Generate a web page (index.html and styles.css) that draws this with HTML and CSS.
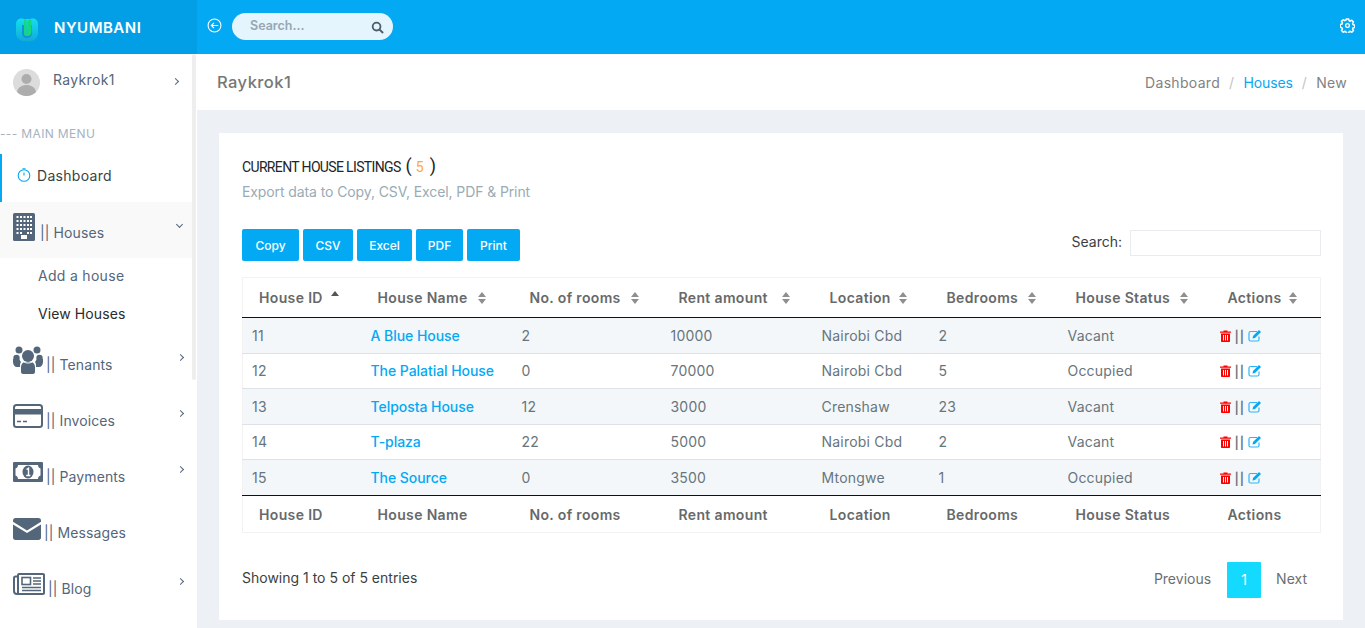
FILE: index.html
```html
<!DOCTYPE html>
<html lang="en">
<head>
    <meta charset="UTF-8">
    <title>Nyumbani - Houses</title>
    <link rel="stylesheet" href="styles.css">
</head>
<body>
    <header class="topbar">
        <div class="brand">
            <svg class="brand-logo" viewBox="0 0 22 24">
                <defs>
                    <linearGradient id="logoFill" x1="0" y1="0" x2="0" y2="1">
                        <stop offset="0" stop-color="#12e0ec"/>
                        <stop offset="1" stop-color="#12a9d8"/>
                    </linearGradient>
                </defs>
                <path d="M0 6c0-3 2-5.500 5-5.500 1.500 0 3 .5 3 .5h6s1.500-.5 3-.5c3 0 5 2.500 5 5.500v9c0 5-4 8.500-11 8.500S0 20 0 15z" fill="url(#logoFill)"/>
                <path d="M6 7v8c0 3 2 5 5 5s5-2 5-5V7h-2v8c0 2-1 3-3 3s-3-1-3-3V7z" fill="#1493d6"/>
                <path d="M8 1.500h2.500V14c0 1 .2 1.500 .5 1.500s.5-.5 .5-1.500V5.500c0-2.500 1-4 2.500-4 1 0 1.500.5 1.500 1.500v11c0 2.500-2 4-4.500 4S8 16.500 8 14z" fill="#14d77f"/>
            </svg>
            <span class="brand-name">NYUMBANI</span>
        </div>
        <div class="topbar-main">
            <svg class="back-icon" viewBox="0 0 14 14">
                <circle cx="7" cy="7" r="6" fill="none" stroke="#fff" stroke-width="1"/>
                <path d="M10.500 7h-6.500M6.500 4.500L4 7l2.500 2.500" fill="none" stroke="#fff" stroke-width="1"/>
            </svg>
            <div class="top-search">
                <span class="top-search-text">Search...</span>
                <svg class="top-search-icon" viewBox="0 0 14 14">
                    <circle cx="6" cy="6" r="4.200" fill="none" stroke="#4f5d6b" stroke-width="2"/>
                    <path d="M9 9l4 4" stroke="#4f5d6b" stroke-width="2.200"/>
                </svg>
            </div>
            <svg class="gear-icon" viewBox="0 0 16 16">
                <circle cx="8" cy="8" r="2" fill="none" stroke="#fff" stroke-width="1.400"/>
                <path d="M6.700 1h2.600l.4 1.900 1.200.5 1.700-1 1.800 1.800-1 1.700.5 1.200 1.900.4v2.600l-1.900.4-.5 1.200 1 1.700-1.800 1.800-1.700-1-1.200.5-.4 1.900H6.700l-.4-1.900-1.200-.5-1.700 1-1.800-1.800 1-1.700-.5-1.200L.2 9.500V6.900l1.900-.4.500-1.200-1-1.700 1.800-1.800 1.700 1 1.200-.5z" fill="none" stroke="#fff" stroke-width="1.600" stroke-linejoin="round"/>
            </svg>
        </div>
    </header>

    <div class="layout">
        <aside class="sidebar">
            <div class="user-panel">
                <svg class="avatar" viewBox="0 0 27 27">
                    <circle cx="13.500" cy="13.500" r="13.500" fill="#dcdcdc"/>
                    <circle cx="13.500" cy="10" r="5" fill="#adadad"/>
                    <path d="M4 23c1-5 5-7 9.500-7s8.500 2 9.500 7c-2.500 2.500-6 4-9.500 4s-7-1.500-9.500-4z" fill="#adadad"/>
                </svg>
                <span class="user-name">Raykrok1</span>
                <span class="chev chev-user"></span>
            </div>
            <div class="menu-label">--- MAIN MENU</div>
            <a class="nav-dash">
                <svg class="dash-icon" viewBox="0 0 14 14">
                    <circle cx="7" cy="7.500" r="5.800" fill="none" stroke="#03a9f3" stroke-width="1.100"/>
                    <path d="M5.500.7h3M7 4.500v3" stroke="#03a9f3" stroke-width="1.100" fill="none"/>
                </svg>
                <span>Dashboard</span>
            </a>
            <a class="nav-item nav-open">
                <svg class="nav-icon icon-building" viewBox="0 0 22 28">
                    <rect width="22" height="28" rx="1.500" fill="#54667a"/>
                    <g fill="#fff">
                        <rect x="3.500" y="3" width="2" height="2"/><rect x="7" y="3" width="2" height="2"/><rect x="10.500" y="3" width="2" height="2"/><rect x="14" y="3" width="2" height="2"/><rect x="17" y="3" width="2" height="2"/>
                        <rect x="3.500" y="7" width="2" height="2"/><rect x="7" y="7" width="2" height="2"/><rect x="10.500" y="7" width="2" height="2"/><rect x="14" y="7" width="2" height="2"/><rect x="17" y="7" width="2" height="2"/>
                        <rect x="3.500" y="11" width="2" height="2"/><rect x="7" y="11" width="2" height="2"/><rect x="10.500" y="11" width="2" height="2"/><rect x="14" y="11" width="2" height="2"/><rect x="17" y="11" width="2" height="2"/>
                        <rect x="3.500" y="15" width="2" height="2"/><rect x="7" y="15" width="2" height="2"/><rect x="10.500" y="15" width="2" height="2"/><rect x="14" y="15" width="2" height="2"/><rect x="17" y="15" width="2" height="2"/>
                        <rect x="3.500" y="19" width="2" height="2"/><rect x="7" y="19" width="2" height="2"/><rect x="14" y="19" width="2" height="2"/><rect x="17" y="19" width="2" height="2"/>
                        <rect x="8" y="22" width="6" height="4"/>
                    </g>
                </svg>
                <span>|| Houses</span>
                <span class="chev chev-down"></span>
            </a>
            <div class="submenu">
                <a class="sub-item">Add a house</a>
                <a class="sub-item sub-active">View Houses</a>
            </div>
            <a class="nav-item">
                <svg class="nav-icon icon-wide" viewBox="0 0 30 28">
                    <g fill="#54667a">
                        <circle cx="6" cy="4" r="3.500"/><circle cx="24" cy="4" r="3.500"/>
                        <circle cx="3.500" cy="12" r="3.200"/><circle cx="26.500" cy="12" r="3.200"/>
                        <circle cx="15" cy="10" r="6"/>
                        <path d="M0 13h6l2 3c-1 1-1 3-1 5H4c-2 0-4-2-4-5zM30 13h-6l-2 3c1 1 1 3 1 5h3c2 0 4-2 4-5z"/>
                        <path d="M8 21c0-3 2-5 4-5h6c2 0 4 2 4 5v5c0 1-1 2-2 2H10c-1 0-2-1-2-2z"/>
                    </g>
                    <path d="M9 14c1 2 3 3 6 3s5-1 6-3" fill="none" stroke="#fff" stroke-width="1"/>
                </svg>
                <span>|| Tenants</span>
                <span class="chev"></span>
            </a>
            <a class="nav-item">
                <svg class="nav-icon icon-wide" viewBox="0 0 30 24">
                    <rect x="1" y="1" width="28" height="22" rx="2.500" fill="#fff" stroke="#54667a" stroke-width="2"/>
                    <rect x="1" y="5" width="28" height="5.500" fill="#54667a"/>
                    <path d="M4 17.500h4M10 17.500h4" stroke="#54667a" stroke-width="1.600"/>
                </svg>
                <span>|| Invoices</span>
                <span class="chev"></span>
            </a>
            <a class="nav-item">
                <svg class="nav-icon icon-wide" viewBox="0 0 30 20">
                    <rect width="30" height="20" rx="1" fill="#54667a"/>
                    <path d="M5 3h20c0 2 1 3 2.500 3.500v7C26 14 25 15 25 17H5c0-2-1-3-2.500-3.500v-7C4 6 5 5 5 3z" fill="#fff"/>
                    <ellipse cx="15" cy="10" rx="5.500" ry="6.500" fill="#54667a"/>
                    <path d="M13.500 7.500l2-1.200v7M13.200 13.500h4.200" stroke="#fff" stroke-width="1.400" fill="none"/>
                </svg>
                <span>|| Payments</span>
                <span class="chev"></span>
            </a>
            <a class="nav-item">
                <svg class="nav-icon icon-mail" viewBox="0 0 28 22">
                    <path d="M2.500 0h23C27 0 28 1 28 2.500v1.300L14 12.500 0 3.800V2.500C0 1 1 0 2.500 0z" fill="#54667a"/>
                    <path d="M0 6.500l14 8.500 14-8.500v13c0 1.500-1 2.500-2.500 2.500h-23C1 22 0 21 0 19.500z" fill="#54667a"/>
                </svg>
                <span>|| Messages</span>
            </a>
            <a class="nav-item">
                <svg class="nav-icon icon-news" viewBox="0 0 32 22">
                    <rect x="5" y="1" width="26" height="20" rx="1" fill="#fff" stroke="#54667a" stroke-width="2"/>
                    <path d="M5 3.500H2.500C1.500 3.500 1 4 1 5v13c0 2 1 3 3 3h2" fill="none" stroke="#54667a" stroke-width="2"/>
                    <rect x="9" y="4.500" width="8.500" height="7" fill="none" stroke="#54667a" stroke-width="1.600"/>
                    <path d="M20 5h8M20 8h8M20 11h8M9 14.500h19M9 17.500h19" stroke="#54667a" stroke-width="1.500"/>
                </svg>
                <span>|| Blog</span>
                <span class="chev"></span>
            </a>
            <div class="scroll-thumb"></div>
        </aside>

        <main class="main">
            <div class="page-title">
                <h2>Raykrok1</h2>
                <div class="breadcrumb">
                    <span>Dashboard</span>
                    <i>/</i>
                    <a>Houses</a>
                    <i>/</i>
                    <span>New</span>
                </div>
            </div>

            <section class="card">
                <h4 class="card-title">CURRENT HOUSE LISTINGS <span class="paren">(</span> <b>5</b> <span class="paren">)</span></h4>
                <p class="card-sub">Export data to Copy, CSV, Excel, PDF &amp; Print</p>

                <div class="toolbar">
                    <div class="buttons">
                        <button>Copy</button>
                        <button>CSV</button>
                        <button>Excel</button>
                        <button>PDF</button>
                        <button>Print</button>
                    </div>
                    <label class="filter">Search: <input type="text"></label>
                </div>

                <table class="listing" id="listing">
                    <colgroup>
                        <col class="c1"><col class="c2"><col class="c3"><col class="c4"><col class="c5"><col class="c6"><col class="c7"><col class="c8">
                    </colgroup>
                    <thead>
                        <tr>
                            <th>House ID <span class="sort sort-up"></span></th>
                            <th>House Name <span class="sort"></span></th>
                            <th>No. of rooms <span class="sort"></span></th>
                            <th>Rent amount <span class="sort"></span></th>
                            <th>Location <span class="sort"></span></th>
                            <th>Bedrooms <span class="sort"></span></th>
                            <th>House Status <span class="sort"></span></th>
                            <th>Actions <span class="sort"></span></th>
                        </tr>
                    </thead>
                    <tbody>
                        <tr class="odd"><td>11</td><td><a>A Blue House</a></td><td>2</td><td>10000</td><td>Nairobi Cbd</td><td>2</td><td>Vacant</td><td class="actions"><svg class="trash" viewBox="0 0 11 12"><path d="M3.500 1.500V.5h4v1H11v1.300H0V1.500zM1 3.500h9V11c0 .6-.4 1-1 1H2c-.6 0-1-.4-1-1zM3 5v5.500h1V5zm2 0v5.500h1V5zm2 0v5.500h1V5z" fill="#f00" fill-rule="evenodd"/></svg><span class="pipes">||</span><svg class="edit" viewBox="0 0 14 12"><path d="M9 1.500H2.500C1.500 1.500 1 2 1 3v6.500c0 1 .5 1.500 1.500 1.500h7c1 0 1.500-.5 1.500-1.500V6.500" fill="none" stroke="#2fb5f5" stroke-width="1.200"/><path d="M4.500 8.500L5 6l6-6 2 2-6 6z" fill="#03a9f3"/></svg></td></tr>
                        <tr><td>12</td><td><a>The Palatial House</a></td><td>0</td><td>70000</td><td>Nairobi Cbd</td><td>5</td><td>Occupied</td><td class="actions"><svg class="trash" viewBox="0 0 11 12"><path d="M3.500 1.500V.5h4v1H11v1.300H0V1.500zM1 3.500h9V11c0 .6-.4 1-1 1H2c-.6 0-1-.4-1-1zM3 5v5.500h1V5zm2 0v5.500h1V5zm2 0v5.500h1V5z" fill="#f00" fill-rule="evenodd"/></svg><span class="pipes">||</span><svg class="edit" viewBox="0 0 14 12"><path d="M9 1.500H2.500C1.500 1.500 1 2 1 3v6.500c0 1 .5 1.500 1.500 1.500h7c1 0 1.500-.5 1.500-1.500V6.500" fill="none" stroke="#2fb5f5" stroke-width="1.200"/><path d="M4.500 8.500L5 6l6-6 2 2-6 6z" fill="#03a9f3"/></svg></td></tr>
                        <tr class="odd"><td>13</td><td><a>Telposta House</a></td><td>12</td><td>3000</td><td>Crenshaw</td><td>23</td><td>Vacant</td><td class="actions"><svg class="trash" viewBox="0 0 11 12"><path d="M3.500 1.500V.5h4v1H11v1.300H0V1.500zM1 3.500h9V11c0 .6-.4 1-1 1H2c-.6 0-1-.4-1-1zM3 5v5.500h1V5zm2 0v5.500h1V5zm2 0v5.500h1V5z" fill="#f00" fill-rule="evenodd"/></svg><span class="pipes">||</span><svg class="edit" viewBox="0 0 14 12"><path d="M9 1.500H2.500C1.500 1.500 1 2 1 3v6.500c0 1 .5 1.500 1.500 1.500h7c1 0 1.500-.5 1.500-1.500V6.500" fill="none" stroke="#2fb5f5" stroke-width="1.200"/><path d="M4.500 8.500L5 6l6-6 2 2-6 6z" fill="#03a9f3"/></svg></td></tr>
                        <tr><td>14</td><td><a>T-plaza</a></td><td>22</td><td>5000</td><td>Nairobi Cbd</td><td>2</td><td>Vacant</td><td class="actions"><svg class="trash" viewBox="0 0 11 12"><path d="M3.500 1.500V.5h4v1H11v1.300H0V1.500zM1 3.500h9V11c0 .6-.4 1-1 1H2c-.6 0-1-.4-1-1zM3 5v5.500h1V5zm2 0v5.500h1V5zm2 0v5.500h1V5z" fill="#f00" fill-rule="evenodd"/></svg><span class="pipes">||</span><svg class="edit" viewBox="0 0 14 12"><path d="M9 1.500H2.500C1.500 1.500 1 2 1 3v6.500c0 1 .5 1.500 1.500 1.500h7c1 0 1.500-.5 1.500-1.500V6.500" fill="none" stroke="#2fb5f5" stroke-width="1.200"/><path d="M4.500 8.500L5 6l6-6 2 2-6 6z" fill="#03a9f3"/></svg></td></tr>
                        <tr class="odd"><td>15</td><td><a>The Source</a></td><td>0</td><td>3500</td><td>Mtongwe</td><td>1</td><td>Occupied</td><td class="actions"><svg class="trash" viewBox="0 0 11 12"><path d="M3.500 1.500V.5h4v1H11v1.300H0V1.500zM1 3.500h9V11c0 .6-.4 1-1 1H2c-.6 0-1-.4-1-1zM3 5v5.500h1V5zm2 0v5.500h1V5zm2 0v5.500h1V5z" fill="#f00" fill-rule="evenodd"/></svg><span class="pipes">||</span><svg class="edit" viewBox="0 0 14 12"><path d="M9 1.500H2.500C1.500 1.500 1 2 1 3v6.500c0 1 .5 1.500 1.500 1.500h7c1 0 1.500-.5 1.500-1.500V6.500" fill="none" stroke="#2fb5f5" stroke-width="1.200"/><path d="M4.500 8.500L5 6l6-6 2 2-6 6z" fill="#03a9f3"/></svg></td></tr>
                    </tbody>
                    <tfoot>
                        <tr>
                            <th>House ID</th><th>House Name</th><th>No. of rooms</th><th>Rent amount</th><th>Location</th><th>Bedrooms</th><th>House Status</th><th>Actions</th>
                        </tr>
                    </tfoot>
                </table>

                <div class="table-foot">
                    <span class="info">Showing 1 to 5 of 5 entries</span>
                    <div class="pager">
                        <a>Previous</a>
                        <a class="current">1</a>
                        <a>Next</a>
                    </div>
                </div>
            </section>
        </main>
    </div>
</body>
</html>
```

FILE: styles.css
```css
* {
    box-sizing: border-box;
}
html, body {
    height: 628px;
    overflow: hidden;
}
body {
    margin: 0;
    font-family: Inter, "Noto Sans", sans-serif;
    font-size: 14px;
    color: #67757c;
    background: #edf1f5;
}
.topbar {
    display: flex;
    height: 54px;
    background: #03a9f3;
}
.brand {
    display: flex;
    align-items: center;
    width: 197px;
    padding-left: 16px;
    background: #039fe6;
}
.brand-logo {
    width: 22px;
    height: 24px;
    margin-top: 6px;
}
.brand-name {
    margin-left: 16px;
    color: #fff;
    font-size: 15px;
    font-weight: 600;
    letter-spacing: .5px;
}
.topbar-main {
    flex: 1;
    display: flex;
    align-items: center;
    padding: 0 10px 2px 10px;
}
.back-icon {
    width: 15px;
    height: 15px;
    margin-bottom: 1px;
}
.top-search {
    display: flex;
    align-items: center;
    justify-content: space-between;
    width: 161px;
    height: 27px;
    margin-left: 10px;
    padding: 0 9px 0 18px;
    border-radius: 14px;
    background: #e4f5fe;
}
.top-search-text {
    color: #98a6b2;
    font-size: 12.500px;
    font-weight: 600;
    margin-top: -2px;
}
.top-search-icon {
    width: 13px;
    height: 13px;
    margin-top: 2px;
}
.gear-icon {
    width: 15px;
    height: 15px;
    margin: 0 0 1px auto;
}
.layout {
    display: flex;
    height: 574px;
}
.sidebar {
    position: relative;
    flex: none;
    width: 197px;
    background: #fff;
    color: #54667a;
    overflow: hidden;
}
.user-panel {
    display: flex;
    align-items: center;
    height: 56px;
    padding: 0 0 0 13px;
}
.avatar {
    width: 27px;
    height: 27px;
    margin-top: 1px;
}
.user-name {
    margin: -6px 0 0 13px;
    letter-spacing: .35px;
}
.chev {
    position: absolute;
    right: 14px;
    top: 18px;
    width: 5px;
    height: 5px;
    border-top: 1px solid #54667a;
    border-right: 1px solid #54667a;
    transform: rotate(45deg);
}
.chev-user {
    top: 25px;
    right: 19px;
}
.chev-down {
    top: 20px;
    right: 10px;
    transform: rotate(135deg);
}
.menu-label {
    height: 44px;
    padding-top: 16px;
    color: #a6b3c0;
    font-size: 12px;
    letter-spacing: .35px;
}
.nav-dash {
    display: flex;
    align-items: center;
    height: 48px;
    padding-left: 16px;
    border-left: 2px solid #03a9f3;
    color: #3c3f42;
    font-weight: 400;
    letter-spacing: .3px;
    background: #fff;
}
.nav-dash span {
    margin-top: -6px;
}
.dash-icon {
    width: 14px;
    height: 14px;
    margin: -6px 6px 0 -1px;
}
.nav-item {
    position: relative;
    display: flex;
    align-items: center;
    height: 56px;
    padding-left: 13px;
    letter-spacing: .1px;
}
.nav-item span:not(.chev) {
    margin-top: -2px;
}
.nav-open {
    width: 192px;
    background: #f9f9f9;
}
.nav-open span:not(.chev) {
    margin-top: 4px;
}
.nav-icon {
    flex: none;
    margin-right: 3px;
    margin-top: -10px;
}
.icon-building {
    width: 22px;
    height: 28px;
    margin-right: 5px;
    margin-top: -6px;
}
.icon-wide {
    width: 30px;
    height: 28px;
}
.icon-mail {
    width: 28px;
    height: 22px;
    margin-top: -9px;
}
.icon-news {
    width: 32px;
    height: 22px;
}
.submenu {
    height: 79px;
}
.sub-item {
    display: block;
    height: 38px;
    padding: 9px 0 0 38px;
    letter-spacing: .3px;
}
.sub-active {
    color: #2b2b2b;
    letter-spacing: .1px;
}
.scroll-thumb {
    position: absolute;
    top: 0;
    right: 1px;
    width: 4px;
    height: 326px;
    border-radius: 2px;
    background: #eeeeee;
}
.main {
    flex: 1;
    min-width: 0;
}
.page-title {
    display: flex;
    align-items: center;
    justify-content: space-between;
    height: 56px;
    padding: 0 18px 0 20px;
    background: #fff;
}
.page-title h2 {
    margin: 0 0 1px;
    color: #777;
    font-size: 16.500px;
    font-weight: 500;
    letter-spacing: .45px;
}
.breadcrumb {
    display: flex;
    gap: 9px;
    color: #828282;
    letter-spacing: .3px;
}
.breadcrumb a {
    color: #03a9f3;
    letter-spacing: -.1px;
}
.breadcrumb i {
    color: #c4c4c4;
    font-style: normal;
}
.card {
    margin: 23px 22px 0;
    height: 487px;
    padding: 22px 22px 0 23px;
    background: #fff;
}
.card-title {
    margin: 0;
    color: #212529;
    font-family: Roboto, sans-serif;
    font-size: 14px;
    font-weight: 400;
    line-height: 22px;
    letter-spacing: -.65px;
}
.card-title b {
    color: #ffa91f;
    font-size: 14px;
    font-weight: 400;
    margin: 0 2px;
}
.paren {
    font-size: 18px;
    margin-left: 2px;
}
.card-sub {
    margin: 3px 0 0;
    color: #99abb4;
    font-size: 14px;
    line-height: 22px;
    letter-spacing: -.1px;
}
.toolbar {
    display: flex;
    justify-content: space-between;
    margin-top: 26px;
}
.buttons {
    display: flex;
    gap: 4px;
}
.buttons button {
    height: 32px;
    width: 57px;
    padding: 0;
    border: none;
    border-radius: 2px;
    background: #03a9f3;
    color: #fff;
    font-family: inherit;
    font-size: 12px;
    font-weight: 500;
}
.buttons button:nth-child(2) { width: 50px; }
.buttons button:nth-child(3) { width: 55px; }
.buttons button:nth-child(4) { width: 47px; }
.buttons button:nth-child(5) { width: 53px; }
.filter {
    display: flex;
    gap: 8px;
    margin-top: 1px;
    color: #3c3f42;
    font-weight: 400;
    line-height: 23px;
}
.filter input {
    width: 191px;
    height: 26px;
    border: 1px solid #e9ecef;
    background: #fff;
}
.listing {
    width: 1078px;
    margin-top: 16px;
    border: 1px solid #f3f1f1;
    border-collapse: collapse;
    table-layout: fixed;
}
.c1 { width: 119px; }
.c2 { width: 151px; }
.c3 { width: 149px; }
.c4 { width: 151px; }
.c5 { width: 117px; }
.c6 { width: 129px; }
.c7 { width: 152px; }
.c8 { width: 110px; }
.listing th {
    position: relative;
    height: 40px;
    padding: 0 0 0 16px;
    color: #67696b;
    font-size: 14px;
    font-weight: 600;
    text-align: left;
    white-space: nowrap;
    letter-spacing: .35px;
}
.listing th:nth-child(n+3) {
    padding-left: 17px;
}
.listing thead tr {
    border-bottom: 1px solid #111;
}
.listing tfoot tr {
    border-top: 1px solid #111;
}
.listing tfoot th {
    height: 37px;
    padding-top: 2px;
}
.listing td {
    height: 35.500px;
    padding: 0 0 0 9px;
    border-bottom: 1px solid #dee2e6;
    letter-spacing: .2px;
    white-space: nowrap;
}
.listing tbody tr:last-child td {
    border-bottom: none;
}
.listing a {
    color: #03a9f3;
    font-weight: 500;
    letter-spacing: -.05px;
}
.odd {
    background: #f4f7fa;
}
.pipes {
    margin: 0 3px 0 4px;
    font-size: 12px;
    font-weight: 600;
    letter-spacing: 1px;
    color: #67757c;
}
.trash {
    width: 11px;
    height: 12px;
    vertical-align: -1px;
}
.edit {
    width: 14px;
    height: 12px;
    vertical-align: -1px;
}
.sort {
    position: absolute;
    top: 14px;
    right: 22px;
    width: 9px;
    height: 12px;
}
.listing th:nth-child(2) .sort {
    right: 26px;
}
.sort::before, .sort::after {
    content: "";
    position: absolute;
    left: 0;
    border-left: 4.500px solid transparent;
    border-right: 4.500px solid transparent;
}
.sort::before {
    top: 0;
    border-bottom: 5px solid #8f8f8f;
}
.sort::after {
    bottom: 0;
    border-top: 5px solid #8f8f8f;
}
.sort-up::before {
    top: -1px;
    border-bottom-color: #555;
}
.sort-up::after {
    display: none;
}
.table-foot {
    display: flex;
    align-items: center;
    justify-content: space-between;
    margin-top: 29px;
}
.info {
    color: #3c3f42;
    margin-top: -4px;
}
.pager {
    display: flex;
    align-items: center;
    color: #6c6f72;
}
.pager a {
    padding: 0 14px;
    margin-bottom: 2px;
}
.pager a:last-child {
    padding-left: 13px;
}
.pager .current {
    display: flex;
    align-items: center;
    justify-content: center;
    width: 34px;
    height: 36px;
    padding: 0;
    margin: 0 2px;
    border-radius: 1px;
    background: #13dafe;
    color: #fff;
}
```
